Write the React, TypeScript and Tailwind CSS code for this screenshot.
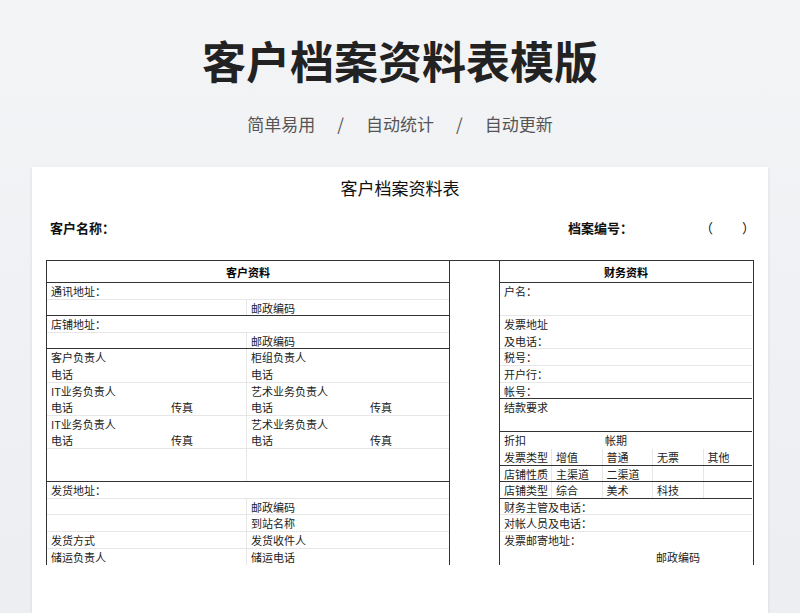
import React from "react";

type C = { t?: string; w: string; lb?: boolean };

const font = { fontFamily: '"Noto Sans CJK SC", "Liberation Serif", serif' };

// one table row; cells are laid out side by side, bottom border light or dark
function Row({ cells, dark, light = true }: { cells: C[]; dark?: boolean; light?: boolean }) {
  return (
    <div
      className={`flex h-[16.6px] text-[11px] leading-[16px] text-[#222] ${
        dark ? "border-b border-[#333]" : light ? "border-b border-[#e6e6e6]" : ""
      }`}
    >
      {cells.map((c, i) => (
        <div key={i} className={`${c.w} shrink-0 px-[4px] whitespace-nowrap overflow-hidden ${c.lb ? "border-l border-[#e6e6e6]" : ""}`}>
          {c.t}
        </div>
      ))}
    </div>
  );
}

const L = "w-[199px]";
const R = "w-[204px] ";
const lr = (a: string, b: string, dark?: boolean, light = true) => (
  <Row dark={dark} light={light} cells={[{ t: a, w: L }, { t: b, w: R, lb: true }]} />
);

function Left() {
  return (
    <div className="w-[403px] border-r border-[#333]">
      <div className="h-[22px] border-b border-[#333] text-center text-[11px] font-bold leading-[22px]">客户资料</div>
      <Row cells={[{ t: "通讯地址：", w: "w-full" }]} />
      {lr("", "邮政编码", true)}
      <Row cells={[{ t: "店铺地址：", w: "w-full" }]} />
      {lr("", "邮政编码", true)}
      {lr("客户负责人", "柜组负责人", false, false)}
      {lr("电话", "电话")}
      {lr("IT业务负责人", "艺术业务负责人", false, false)}
      <Row cells={[{ t: "电话", w: "w-[120px]" }, { t: "传真", w: "w-[79px]" }, { t: "电话", w: "w-[120px]", lb: true }, { t: "传真", w: "w-[84px]" }]} />
      {lr("IT业务负责人", "艺术业务负责人", false, false)}
      <Row cells={[{ t: "电话", w: "w-[120px]" }, { t: "传真", w: "w-[79px]" }, { t: "电话", w: "w-[120px]", lb: true }, { t: "传真", w: "w-[84px]" }]} />
      {lr("", "", false, false)}
      {lr("", "", true)}
      <Row cells={[{ t: "发货地址：", w: "w-full" }]} />
      {lr("", "邮政编码")}
      {lr("", "到站名称")}
      {lr("发货方式", "发货收件人")}
      {lr("储运负责人", "储运电话", false, false)}
    </div>
  );
}

const c5 = (a: string[], dark?: boolean) => (
  <Row
    dark={dark}
    cells={a.map((t, i) => ({ t, w: i === 4 ? "w-[50px]" : i === 0 ? "w-[51px]" : "w-[50.5px]", lb: i > 0 && dark }))}
  />
);

function Right() {
  const full = (t: string, dark?: boolean, light = true) => <Row dark={dark} light={light} cells={[{ t, w: "w-full" }]} />;
  return (
    <div className="w-[253px] border-l border-[#333]">
      <div className="h-[22px] border-b border-[#333] text-center text-[11px] font-bold leading-[22px]">财务资料</div>
      {full("户名：", false, false)}
      {full("")}
      {full("发票地址", false, false)}
      {full("及电话：")}
      {full("税号：")}
      {full("开户行：")}
      {full("帐号：", true)}
      {full("结款要求", false, false)}
      {full("", true)}
      <Row light={false} cells={[{ t: "折扣", w: "w-[101px]" }, { t: "帐期", w: "w-[150px]" }]} />
      {c5(["发票类型", "增值", "普通", "无票", "其他"], true)}
      {c5(["店铺性质", "主渠道", "二渠道", "", ""], true)}
      {c5(["店铺类型", "综合", "美术", "科技", ""], true)}
      {full("财务主管及电话：")}
      {full("对帐人员及电话：")}
      {full("发票邮寄地址：", false, false)}
      <Row light={false} cells={[{ t: "", w: "w-[152px]" }, { t: "邮政编码", w: "w-[100px]" }]} />
    </div>
  );
}

export default function App() {
  return (
    <div className="h-[613px] w-[800px] overflow-hidden bg-gradient-to-b from-[#f3f4f6] to-[#eceef1]" style={font}>
      <h1 className="pt-[30px] text-center text-[44px] font-bold leading-[60px] text-[#222]">客户档案资料表模版</h1>
      <div className="mt-[22px] flex justify-center gap-[22px] text-[17px] leading-[24px] text-[#555]">
        <span>简单易用</span>
        <span>/</span>
        <span>自动统计</span>
        <span>/</span>
        <span>自动更新</span>
      </div>
      <div className="mx-[32px] mt-[31px] h-[460px] bg-white pt-[9px] shadow-sm">
        <div className="text-center text-[17px] leading-[24px] text-[#111]">客户档案资料表</div>
        <div className="mt-[18px] flex items-center whitespace-nowrap px-[18px] text-[13px] font-bold leading-[20px] text-[#111]">
          <span className="w-[518px] shrink-0">客户名称：</span>
          <span className="w-[132px] shrink-0">档案编号：</span>
          <span className="w-[42px] shrink-0 font-normal">（</span>
          <span className="font-normal">）</span>
        </div>
        <div className="mx-[14px] mt-[22px] flex border-l border-r border-t border-[#333]">
          <Left />
          <div className="w-[49px]" />
          <Right />
        </div>
      </div>
    </div>
  );
}
